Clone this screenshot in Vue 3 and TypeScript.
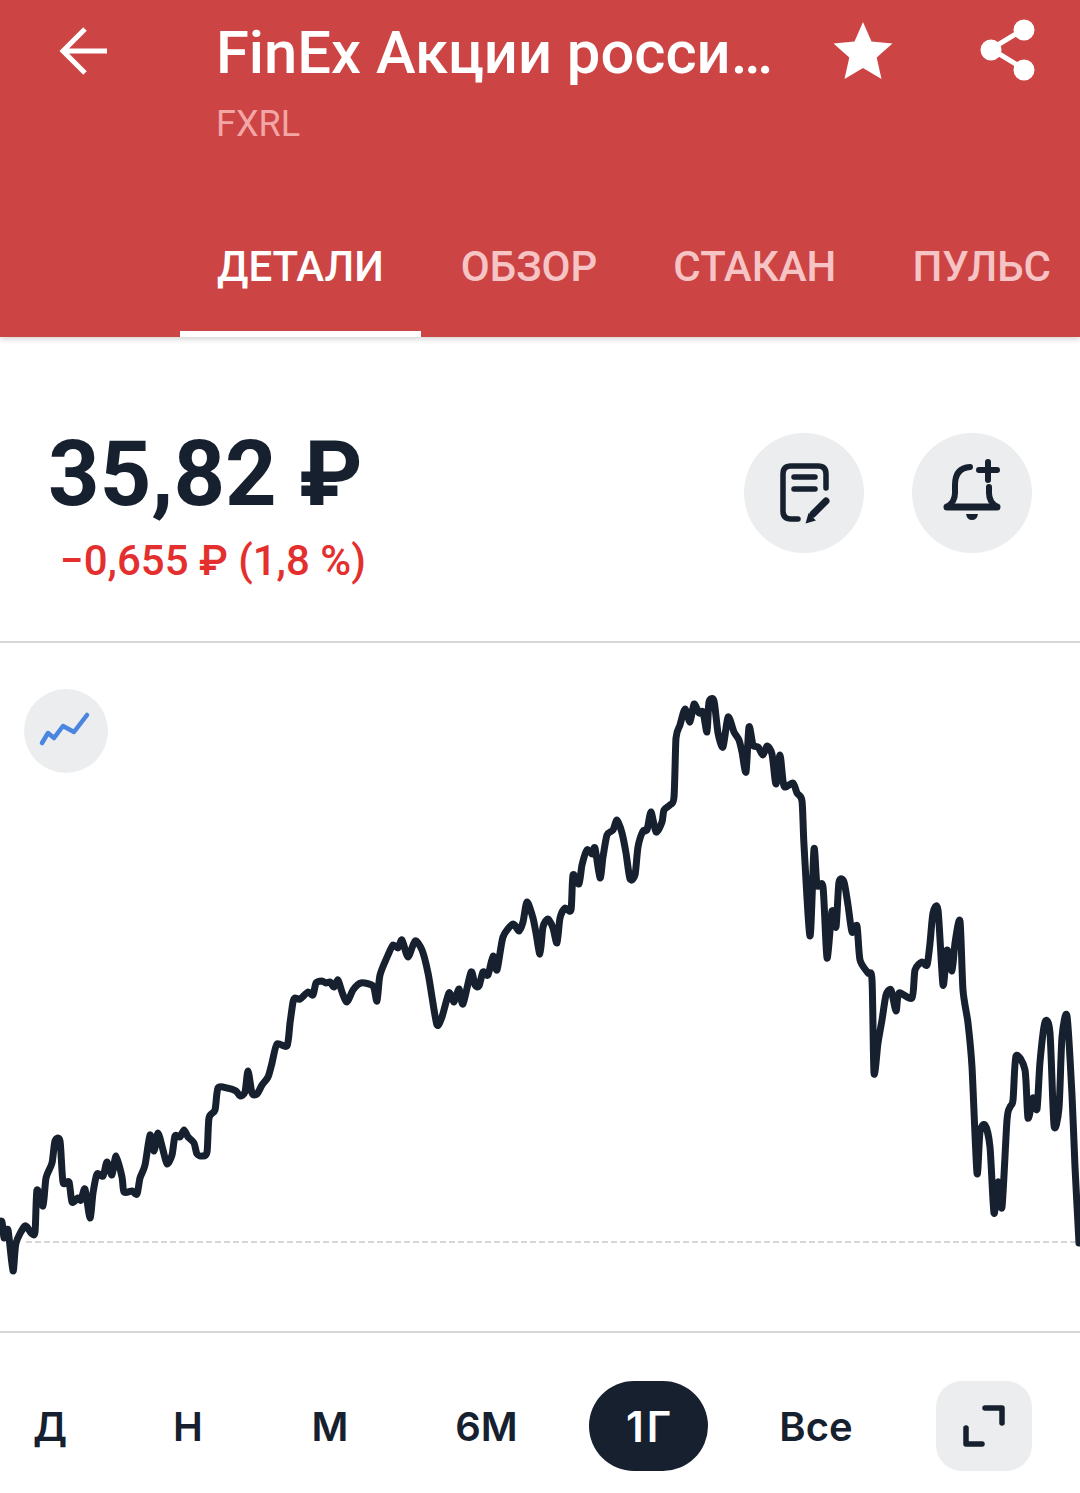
<template>
  <div class="screen">
    <header class="header">
      <div class="top">
        <svg class="back" viewBox="0 0 56 56" fill="none" stroke="#fff" stroke-width="5">
          <path d="M7 27h45M30 5 8 27l22 22" />
        </svg>
        <div class="names">
          <div class="name">FinEx Акции росси…</div>
          <div class="ticker">FXRL</div>
        </div>
        <svg class="star" viewBox="0 0 60 60" fill="#fff">
          <path d="M30 1l8.500 19.500 21 2-15.800 14 4.800 21.500L30 47 11.500 58l4.800-21.500L.5 22.500l21-2z" />
        </svg>
        <svg class="share" viewBox="0 0 56 62" fill="#fff" stroke="#fff" stroke-width="5">
          <path d="M45 10 12 30l33 20" fill="none" />
          <circle cx="45" cy="11" r="8" />
          <circle cx="12" cy="31" r="8" />
          <circle cx="45" cy="51" r="8" />
        </svg>
      </div>
      <nav class="tabs">
        <div v-for="tab in tabs" :key="tab" class="tab" :class="{ active: tab === 'ДЕТАЛИ' }">{{ tab }}</div>
      </nav>
    </header>

    <section class="quote">
      <div>
        <div class="price">35,82 ₽</div>
        <div class="change">−0,655 ₽ (1,8 %)</div>
      </div>
      <div class="actions">
        <button class="round">
          <svg viewBox="0 0 120 120" fill="none" stroke="#16202e" stroke-width="5.500" stroke-linecap="round">
            <path d="M82 55V41q0-8-8-8H47q-8 0-8 8v37q0 8 8 8h7" />
            <path d="M50 44h21M50 56h21" />
            <path d="M82 68 69 81" stroke-width="7" />
            <path d="M63 89l2-7 5 5z" fill="#16202e" stroke-width="2" />
          </svg>
        </button>
        <button class="round">
          <svg viewBox="0 0 120 120" fill="none" stroke="#16202e" stroke-width="6" stroke-linecap="round">
            <path d="M58 34q-15 1-15 18v8q0 9-8 14h50q-8-5-8-14v-6" stroke-linejoin="round" />
            <path d="M35 74h50" stroke-width="7" />
            <path d="M67 37h18M76 29v18" />
            <path d="M54 81h12q-1 6-6 6t-6-6z" fill="#16202e" stroke="none" />
          </svg>
        </button>
      </div>
    </section>

    <section class="chart">
      <svg class="plot" viewBox="0 643 1080 688" fill="none">
        <line x1="26" y1="1242" x2="1080" y2="1242" stroke="#d6d6d6" stroke-width="2" stroke-dasharray="6 3" />
        <path :d="linePath" stroke="#16202e" stroke-width="7" stroke-linejoin="round" stroke-linecap="round" />
      </svg>
      <button class="mode">
        <svg viewBox="0 0 84 84" fill="none" stroke="#4a86e0" stroke-width="4.500" stroke-linecap="round" stroke-linejoin="round">
          <path d="M18 54l6-10 6 5 9-12 11 6 13-17" />
        </svg>
      </button>
    </section>

    <footer class="ranges">
      <div v-for="range in ranges" :key="range" class="range" :class="{ selected: range === '1Г' }">{{ range }}</div>
      <button class="expand">
        <svg viewBox="0 0 96 90" fill="none" stroke="#16202e" stroke-width="5.500" stroke-linecap="round" stroke-linejoin="round">
          <path d="M49 27h17v15M30 47v16h16" />
        </svg>
      </button>
    </footer>
  </div>
</template>

<script setup lang="ts">
import { computed } from 'vue'

const tabs = ['ДЕТАЛИ', 'ОБЗОР', 'СТАКАН', 'ПУЛЬС']
const ranges = ['Д', 'Н', 'М', '6М', '1Г', 'Все']

// traced price line, page coordinates
const points: [number, number][] = [
  [-2, 1222], [2, 1222], [4, 1238], [8, 1230], [13, 1271], [16, 1243], [25, 1226], [31, 1233], [35, 1232], [37, 1190],
  [43, 1206], [46, 1178], [52, 1163], [55, 1141], [60, 1141], [63, 1182], [69, 1182], [72, 1202], [78, 1198], [81, 1200],
  [85, 1189], [90, 1218], [93, 1193], [97, 1174], [103, 1176], [107, 1162], [112, 1175], [116, 1156], [122, 1177], [124, 1192],
  [132, 1191], [137, 1194], [140, 1178], [145, 1165], [150, 1135], [154, 1151], [158, 1133], [163, 1150], [167, 1164], [172, 1155],
  [175, 1136], [180, 1137], [184, 1130], [188, 1137], [194, 1143], [197, 1154], [202, 1156], [207, 1152], [209, 1118], [215, 1110],
  [218, 1088], [227, 1088], [236, 1091], [240, 1096], [245, 1092], [248, 1071], [252, 1093], [257, 1094], [262, 1085], [268, 1077],
  [272, 1063], [277, 1044], [287, 1046], [290, 1023], [293, 1002], [295, 998], [300, 999], [308, 992], [313, 995], [316, 983],
  [322, 981], [326, 983], [330, 982], [334, 987], [338, 980], [342, 992], [347, 1002], [353, 990], [361, 983], [373, 986],
  [377, 1001], [380, 975], [388, 955], [393, 945], [398, 948], [402, 940], [408, 957], [415, 941], [422, 950], [428, 973],
  [432, 997], [437, 1025], [442, 1017], [449, 993], [454, 1002], [459, 989], [463, 1004], [471, 972], [475, 985], [479, 986],
  [483, 972], [488, 975], [493, 956], [497, 970], [503, 937], [513, 924], [519, 931], [523, 922], [527, 902], [533, 918],
  [536, 933], [540, 954], [543, 927], [548, 919], [553, 928], [557, 943], [560, 918], [565, 908], [571, 910], [573, 875],
  [579, 884], [582, 865], [587, 850], [592, 854], [595, 848], [600, 878], [603, 857], [607, 835], [613, 830], [617, 820],
  [622, 833], [626, 853], [630, 879], [635, 875], [638, 847], [643, 831], [647, 830], [651, 812], [656, 832], [662, 822],
  [664, 810], [670, 805], [674, 797], [676, 738], [680, 725], [685, 709], [690, 722], [694, 704], [699, 713], [703, 712],
  [707, 732], [709, 702], [714, 701], [718, 733], [723, 747], [728, 717], [734, 732], [739, 740], [742, 752], [746, 772],
  [749, 727], [753, 745], [758, 747], [763, 755], [767, 746], [772, 754], [776, 784], [780, 755], [784, 786], [793, 783],
  [797, 793], [802, 801], [804, 845], [810, 936], [814, 849], [817, 885], [823, 887], [827, 958], [832, 911], [836, 927],
  [839, 882], [844, 882], [848, 905], [852, 932], [857, 926], [860, 960], [868, 973], [872, 980], [874, 1073], [878, 1043],
  [882, 1020], [886, 995], [891, 990], [896, 1011], [899, 993], [912, 998], [915, 970], [922, 962], [927, 965], [930, 943],
  [933, 913], [938, 910], [943, 985], [947, 950], [952, 971], [955, 943], [960, 921], [963, 990], [968, 1023], [972, 1067],
  [977, 1173], [980, 1132], [985, 1125], [990, 1147], [994, 1213], [998, 1182], [1002, 1207], [1007, 1120], [1010, 1107], [1013, 1100],
  [1016, 1056], [1025, 1070], [1028, 1118], [1033, 1098], [1037, 1109], [1040, 1062], [1045, 1022], [1050, 1033], [1054, 1125], [1059, 1108],
  [1062, 1037], [1067, 1016], [1072, 1095], [1075, 1167], [1079, 1243],
]

// catmull-rom through the traced points so the line keeps its soft peaks
const linePath = computed(() => {
  let d = `M${points[0][0]} ${points[0][1]}`
  for (let i = 0; i < points.length - 1; i++) {
    const p0 = points[Math.max(i - 1, 0)]
    const p1 = points[i]
    const p2 = points[i + 1]
    const p3 = points[Math.min(i + 2, points.length - 1)]
    const c1x = p1[0] + (p2[0] - p0[0]) / 8
    const c1y = p1[1] + (p2[1] - p0[1]) / 8
    const c2x = p2[0] - (p3[0] - p1[0]) / 8
    const c2y = p2[1] - (p3[1] - p1[1]) / 8
    d += `C${c1x.toFixed(1)} ${c1y.toFixed(1)} ${c2x.toFixed(1)} ${c2y.toFixed(1)} ${p2[0]} ${p2[1]}`
  }
  return d
})
</script>

<style scoped>
.screen {
  width: 1080px;
  height: 1493px;
  overflow: hidden;
  background: #fff;
  font-family: Inter, "Noto Sans", sans-serif;
  color: #16202e;
}

.header {
  height: 337px;
  background: #cd4444;
  box-shadow: 0 2px 6px rgba(0, 0, 0, 0.18);
  display: flex;
  flex-direction: column;
  justify-content: space-between;
  position: relative;
  font-family: Roboto, sans-serif;
}

.top {
  display: flex;
  align-items: flex-start;
}

.back {
  width: 56px;
  height: 56px;
  margin: 24px 0 0 55px;
  flex: none;
}

.names {
  width: 562px;
  margin-left: 105px;
  padding-top: 18px;
}

.name {
  font-size: 59.7px;
  line-height: 70px;
  font-weight: 500;
  color: #fff;
  white-space: nowrap;
}

.ticker {
  font-size: 36px;
  line-height: 42px;
  margin-top: 15px;
  color: #f2a6a6;
}

.star {
  width: 60px;
  height: 60px;
  margin: 21px 0 0 55px;
  flex: none;
}

.share {
  width: 56px;
  height: 62px;
  margin: 19px 0 0 86px;
  flex: none;
}

.tabs {
  display: flex;
  gap: 2px;
  margin-left: 180px;
  height: 96px;
}

.tab {
  padding: 0 37px;
  font-size: 42px;
  line-height: 52px;
  font-weight: 500;
  color: #f6c4c4;
  white-space: nowrap;
}

.tab.active {
  margin-right: 1px;
  color: #fff;
  box-shadow: inset 0 -6px 0 #fff;
}

.quote {
  height: 306px;
  display: flex;
  justify-content: space-between;
  padding: 96px 48px 0 48px;
  box-sizing: border-box;
  border-bottom: 2px solid #d6d7d9;
}

.price {
  font-family: Roboto, sans-serif;
  font-size: 90px;
  line-height: 84px;
  font-weight: 700;
}

.change {
  margin: 19px 0 0 12px;
  font-family: Roboto, sans-serif;
  font-size: 42px;
  line-height: 50px;
  font-weight: 500;
  color: #e3302f;
}

.actions {
  display: flex;
  gap: 48px;
}

.round {
  width: 120px;
  height: 120px;
  border: 0;
  padding: 0;
  border-radius: 50%;
  background: #ebedef;
}

.round svg,
.mode svg,
.expand svg {
  display: block;
  width: 100%;
  height: 100%;
}

.chart {
  height: 688px;
  position: relative;
  border-bottom: 2px solid #d6d7d9;
}

.plot {
  display: block;
  width: 1080px;
  height: 688px;
}

.mode {
  position: absolute;
  left: 24px;
  top: 46px;
  width: 84px;
  height: 84px;
  border: 0;
  padding: 0;
  border-radius: 50%;
  background: #ebedef;
}

.ranges {
  display: grid;
  grid-template-columns: 100px 176px 108px 205px 119px 216px 96px;
  align-items: center;
  padding-top: 48px;
}

.range {
  height: 90px;
  line-height: 92px;
  text-align: center;
  font-size: 40px;
  font-weight: 600;
}

.range.selected {
  background: #16202e;
  color: #fff;
  border-radius: 45px;
  font-size: 42px;
  letter-spacing: 3px;
  text-indent: 3px;
}

.expand {
  width: 96px;
  height: 90px;
  margin-left: 12px;
  border: 0;
  padding: 0;
  border-radius: 26px;
  background: #ebedef;
}
</style>
